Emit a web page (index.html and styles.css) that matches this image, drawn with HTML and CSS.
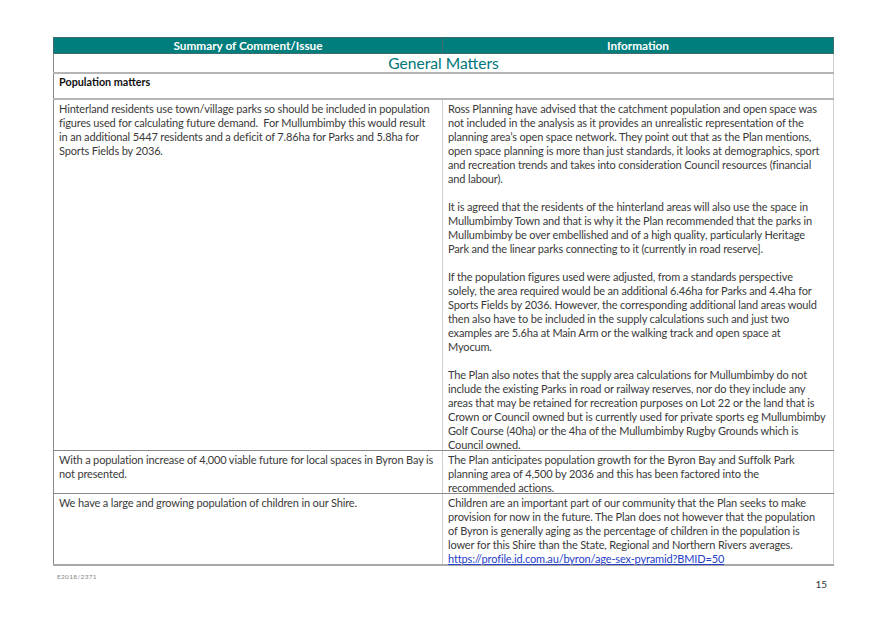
FILE: index.html
```html
<!DOCTYPE html>
<html>
<head>
<meta charset="utf-8">
<link rel="stylesheet" href="styles.css">
</head>
<body>
<div class="page">
  <table class="doc">
    <colgroup><col class="c1"><col class="c2"></colgroup>
    <tr class="head">
      <th>Summary of Comment/Issue</th>
      <th>Information</th>
    </tr>
    <tr class="section">
      <td colspan="2">General Matters</td>
    </tr>
    <tr class="sub">
      <td colspan="2"><div class="subtitle">Population matters</div><div class="spacer"></div></td>
    </tr>
    <tr class="row">
      <td><div class="cell">Hinterland residents use town/village parks so should be included in population<br>figures used for calculating future demand.&nbsp; For Mullumbimby this would result<br>in an additional 5447 residents and a deficit of 7.86ha for Parks and 5.8ha for<br>Sports Fields by 2036.</div></td>
      <td><div class="cell">
        <p>Ross Planning have advised that the catchment population and open space was<br>not included in the analysis as it provides an unrealistic representation of the<br>planning area’s open space network. They point out that as the Plan mentions,<br>open space planning is more than just standards, it looks at demographics, sport<br>and recreation trends and takes into consideration Council resources (financial<br>and labour).</p>
        <p>It is agreed that the residents of the hinterland areas will also use the space in<br>Mullumbimby Town and that is why it the Plan recommended that the parks in<br>Mullumbimby be over embellished and of a high quality, particularly Heritage<br>Park and the linear parks connecting to it (currently in road reserve].</p>
        <p>If the population figures used were adjusted, from a standards perspective<br>solely, the area required would be an additional 6.46ha for Parks and 4.4ha for<br>Sports Fields by 2036. However, the corresponding additional land areas would<br>then also have to be included in the supply calculations such and just two<br>examples are 5.6ha at Main Arm or the walking track and open space at<br>Myocum.</p>
        <p class="last">The Plan also notes that the supply area calculations for Mullumbimby do not<br>include the existing Parks in road or railway reserves, nor do they include any<br>areas that may be retained for recreation purposes on Lot 22 or the land that is<br>Crown or Council owned but is currently used for private sports eg Mullumbimby<br>Golf Course (40ha) or the 4ha of the Mullumbimby Rugby Grounds which is<br>Council owned.</p>
      </div></td>
    </tr>
    <tr class="row">
      <td><div class="cell">With a population increase of 4,000 viable future for local spaces in Byron Bay is<br>not presented.</div></td>
      <td><div class="cell">The Plan anticipates population growth for the Byron Bay and Suffolk Park<br>planning area of 4,500 by 2036 and this has been factored into the<br>recommended actions.</div></td>
    </tr>
    <tr class="row lastrow">
      <td><div class="cell">We have a large and growing population of children in our Shire.</div></td>
      <td><div class="cell">Children are an important part of our community that the Plan seeks to make<br>provision for now in the future. The Plan does not however that the population<br>of Byron is generally aging as the percentage of children in the population is<br>lower for this Shire than the State, Regional and Northern Rivers averages.<br><a href="#" class="link">https://profile.id.com.au/byron/age-sex-pyramid?BMID=50</a></div></td>
    </tr>
  </table>
  <div class="footer">
    <div class="ref">E2018/2371</div>
    <div class="pageno">15</div>
  </div>
</div>
</body>
</html>
```
FILE: styles.css
```css
html, body {
  margin: 0;
  padding: 0;
  background: #ffffff;
}
.page {
  width: 875px;
  height: 619px;
  padding: 37px 0 0 53px;
  box-sizing: border-box;
  font-family: Lato, "Open Sans", sans-serif;
  color: #3a3a3a;
}
.doc {
  width: 780px;
  border-collapse: collapse;
  table-layout: fixed;
  font-size: 11px;
  line-height: 14px;
}
.c1 { width: 389px; }
.c2 { width: 391px; }
.head th {
  background: #007e7e;
  color: #ffffff;
  font-weight: 700;
  font-size: 11.8px;
  line-height: 15px;
  padding: 0;
  text-align: center;
  border: 1px solid #3d6e6e;
}
.section td {
  color: #00757a;
  font-size: 15.6px;
  line-height: 17px;
  text-align: center;
  padding: 1px 0 0;
  border-left: 1px solid #8a8a8a;
  border-right: 1px solid #d0d0d0;
  border-bottom: 2px solid #b4b4b4;
}
.sub td {
  padding: 1px 5px 0;
  border-left: 1px solid #8a8a8a;
  border-right: 1px solid #d0d0d0;
  border-bottom: 2px solid #b4b4b4;
}
.subtitle {
  font-weight: 700;
  font-size: 10.8px;
  line-height: 13px;
  color: #111;
}
.spacer {
  height: 10px;
}
.row td {
  vertical-align: top;
  white-space: nowrap;
  overflow: visible;
  padding: 2px 5px 0;
  border-left: 1px solid #8a8a8a;
  border-right: 1px solid #d0d0d0;
  border-bottom: 1px solid #8a8a8a;
  letter-spacing: -0.15px;
}
.cell {
  margin-bottom: -2px;
}
.cell p {
  margin: 0 0 14px;
}
.cell p.last {
  margin: 0;
}
.lastrow td {
  border-bottom: 2px solid #a8a8a8;
}
.link {
  color: #2640c8;
  text-decoration: underline;
}
.footer {
  width: 780px;
  display: flex;
  justify-content: space-between;
  align-items: flex-start;
}
.ref {
  font-size: 6.5px;
  color: #888;
  margin: 7px 0 0 4px;
  letter-spacing: 0.3px;
}
.pageno {
  font-size: 10px;
  color: #333;
  margin: 12px 6px 0 0;
}
```
